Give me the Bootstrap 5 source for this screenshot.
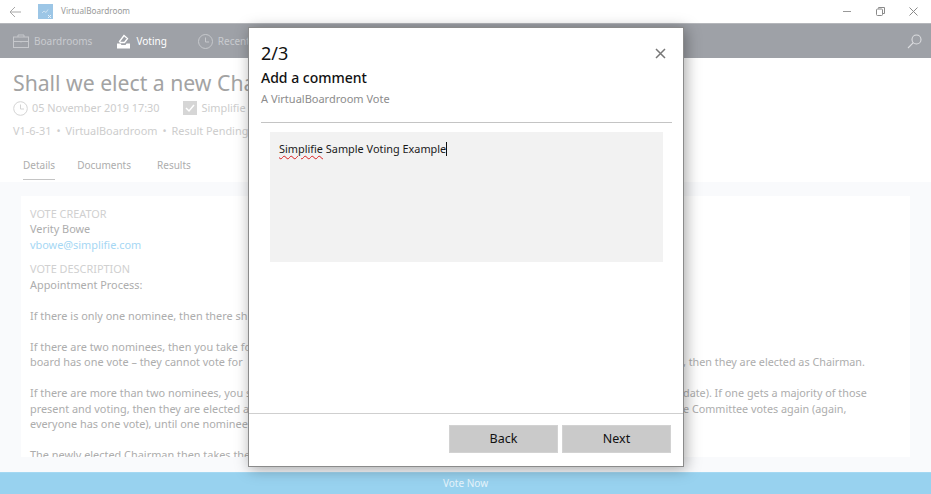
<!DOCTYPE html>
<html lang="en">
<head>
    <meta charset="UTF-8">
    <meta name="viewport" content="width=device-width, initial-scale=1.0">
    <title>VirtualBoardroom</title>
    <link href="https://cdn.jsdelivr.net/npm/bootstrap@5.3.2/dist/css/bootstrap.min.css" rel="stylesheet">
    <style>
        html, body {
            height: 100%;
            overflow: hidden;
        }
        body {
            font-family: "Noto Sans", "Open Sans", sans-serif;
            background-color: #fff;
            color: #999;
        }
        .app-shell {
            position: relative;
            height: 494px;
            display: flex;
            flex-direction: column;
            overflow: hidden;
        }
        .title-bar {
            height: 23px;
            flex: none;
            padding-left: 9px;
            font-size: 8.2px;
            color: #999;
        }
        .app-logo {
            width: 15px;
            height: 15px;
            margin-left: 16px;
            margin-right: 8px;
            background-color: #9cc6e6;
        }
        .win-btns {
            gap: 22px;
            padding-right: 12px;
        }
        .top-nav {
            height: 35px;
            flex: none;
            background-color: #9ea1a7;
            padding: 0 9px 0 13px;
            font-size: 10px;
            color: #c9cbcf;
            border-top: 1px solid #b5b7bb;
        }
        .nav-item-box {
            gap: 5px;
            margin-right: 24px;
            white-space: nowrap;
        }
        .top-nav .active-item {
            color: #fff;
            margin-right: 31px;
        }
        .page-head {
            flex: none;
            height: 124px;
            padding: 8px 13px 0;
        }
        .vote-title {
            font-size: 21.2px;
            font-weight: 400;
            line-height: 34px;
            color: #a3a3a3;
            margin: 0;
            white-space: nowrap;
        }
        .meta-row {
            font-size: 10.9px;
            line-height: 16px;
            color: #cdcdcd;
            white-space: nowrap;
        }
        .meta-check {
            flex: none;
            margin: 0 5px 0 23px;
        }
        .meta-ref {
            margin-top: 7px;
            line-height: 16px;
            font-size: 10.9px;
            color: #cdcdcd;
            white-space: nowrap;
        }
        .meta-dot {
            margin: 0 5px;
        }
        .tab-row {
            margin-top: 15px;
            padding-left: 10px;
            gap: 22px;
            font-size: 10px;
            color: #adadad;
        }
        .tab-entry {
            padding: 4px 0 6px;
        }
        .tab-entry.is-current {
            border-bottom: 1px solid #c4c4c4;
        }
        .detail-area {
            flex: 1 1 auto;
            background-color: #f9fafc;
            padding: 14px 21px 15px;
            min-height: 0;
        }
        .detail-panel {
            height: 100%;
            background-color: #fff;
            padding: 9.6px 9px 0;
            overflow: hidden;
            font-size: 10.9px;
            line-height: 15.5px;
            color: #adadad;
        }
        .field-label {
            color: #d0d0d0;
        }
        .field-link {
            color: #a6d7f4;
            text-decoration: none;
        }
        .field-block {
            margin-bottom: 9px;
        }
        .desc-para {
            margin-bottom: 15.5px;
        }
        .desc-line {
            display: flex;
            white-space: nowrap;
        }
        .desc-left {
            flex: 0 0 653px;
        }
        .desc-right {
            font-size: 10.8px;
        }
        .vote-bar {
            height: 22px;
            flex: none;
            background-color: #98d2ef;
            color: #e6f4fb;
            font-size: 10px;
            border-top: 1px solid #a4d8f2;
        }
        .step-dialog {
            position: absolute;
            left: 248px;
            top: 27px;
            width: 436px;
            height: 440px;
            background-color: #fff;
            border: 1px solid #8b8b8b;
            box-shadow: 2px 2px 14px rgba(0, 0, 0, .35);
            display: flex;
            flex-direction: column;
            color: #111;
        }
        .dialog-head {
            flex: none;
            height: 95px;
            margin: 0 11px 0 12px;
            padding-top: 13px;
            border-bottom: 1px solid #c4c4c4;
            position: relative;
        }
        .step-count {
            font-size: 18px;
            line-height: 24px;
        }
        .step-title {
            font-size: 14px;
            line-height: 20px;
            font-weight: 500;
            margin: 3px 0 0;
        }
        .step-sub {
            font-size: 11px;
            line-height: 16px;
            margin-top: 3px;
            color: #8c8c8c;
        }
        .close-x {
            position: absolute;
            right: 6px;
            top: 20px;
            line-height: 0;
        }
        .dialog-body {
            flex: 1 1 auto;
            padding: 9px 20px 0 21px;
        }
        .comment-box {
            height: 130px;
            background-color: #f2f2f2;
            padding: 8px 9px;
            font-size: 10.9px;
            line-height: 17px;
            color: #1a1a1a;
            white-space: nowrap;
        }
        .spell-err {
            text-decoration: underline wavy #d92020 1px;
            text-underline-offset: 2px;
        }
        .text-caret {
            display: inline-block;
            width: 1px;
            height: 14px;
            background-color: #111;
            vertical-align: -3px;
        }
        .dialog-foot {
            flex: none;
            height: 53px;
            border-top: 1px solid #cfcfcf;
            padding: 11px 12px 0 0;
            gap: 4px;
        }
        .btn.foot-btn {
            width: 109px;
            height: 28px;
            padding: 0;
            border-radius: 0;
            border: 1px solid #d2d2d2;
            background-color: #cacaca;
            color: #111;
            font-size: 12.5px;
            line-height: 26px;
        }
    </style>
</head>
<body>
    <div class="app-shell">
        <div class="title-bar d-flex align-items-center">
            <svg width="13" height="12" viewBox="0 0 13 12" fill="none" stroke="#a8a8a8" stroke-width="1"><path d="M12 6H1M6 1L1 6l5 5"/></svg>
            <svg class="app-logo" viewBox="0 0 15 15"><path d="M4 9l2-2 2 1.500 2-3" fill="none" stroke="#d8e8f5" stroke-width=".8"/><path d="M10 11l3 3M13 11l-3 3" stroke="#e6f0f8" stroke-width="1"/></svg>
            <span>VirtualBoardroom</span>
            <div class="win-btns d-flex align-items-center ms-auto">
                <svg width="11" height="11" viewBox="0 0 11 11" stroke="#999" fill="none"><path d="M1 5.500h8"/></svg>
                <svg width="11" height="11" viewBox="0 0 11 11" stroke="#8a8a8a" fill="none"><rect x="1.500" y="3" width="6" height="6.500" rx="1"/><path d="M3.500 2.500v-1h6v6h-1.500"/></svg>
                <svg width="11" height="11" viewBox="0 0 11 11" stroke="#8a8a8a" fill="none"><path d="M1.500 1.500l8 8M9.500 1.500l-8 8"/></svg>
            </div>
        </div>

        <nav class="top-nav d-flex align-items-center">
            <div class="nav-item-box d-flex align-items-center">
                <svg width="16" height="14" viewBox="0 0 16 14" fill="none" stroke="#c6c8cc"><rect x=".5" y="3" width="15" height="10.500"/><path d="M5 3V1h6v2M.5 7.500h15M8 7v1.500"/></svg>
                <span>Boardrooms</span>
            </div>
            <div class="nav-item-box active-item d-flex align-items-center">
                <svg width="15" height="15" viewBox="0 0 15 15"><path d="M3.500 7.500L8 1.500l3.500 3-3 4h-4z" fill="none" stroke="#fff" stroke-width="1.300"/><path d="M1 9.500h3.500l1 1.500h4l1-1.500H14v5H1z" fill="#fff"/></svg>
                <span>Voting</span>
            </div>
            <div class="nav-item-box d-flex align-items-center">
                <svg width="15" height="15" viewBox="0 0 15 15" fill="none" stroke="#c6c8cc"><circle cx="7.500" cy="7.500" r="7"/><path d="M7.500 3.500v4.500h3.500"/></svg>
                <span>Recent</span>
            </div>
            <svg class="ms-auto" width="15" height="15" viewBox="0 0 15 15" fill="none" stroke="#dcdde0" stroke-width="1.100"><circle cx="9.500" cy="5.500" r="4.500"/><path d="M6.300 8.700L1 14"/></svg>
        </nav>

        <div class="page-head">
            <h1 class="vote-title">Shall we elect a new Cha</h1>
            <div class="meta-row d-flex align-items-center">
                <svg class="flex-shrink-0" width="15" height="15" viewBox="0 0 15 15" fill="none" stroke="#d4d4d4"><circle cx="7.500" cy="7.500" r="6.800"/><path d="M7.500 3.500v4.500h3.500"/></svg>
                <span class="ms-1">05 November 2019 17:30</span>
                <svg class="meta-check" width="14" height="14" viewBox="0 0 14 14"><rect width="14" height="14" fill="#d6d6d6"/><path d="M3 7l3 3 5-6" fill="none" stroke="#fff" stroke-width="1.500"/></svg>
                <span>Simplifie</span>
            </div>
            <div class="meta-ref">V1-6-31<span class="meta-dot">&bull;</span>VirtualBoardroom<span class="meta-dot">&bull;</span>Result Pending</div>
            <div class="tab-row d-flex">
                <div class="tab-entry is-current">Details</div>
                <div class="tab-entry">Documents</div>
                <div class="tab-entry ms-1">Results</div>
            </div>
        </div>

        <div class="detail-area">
            <div class="detail-panel">
                <div class="field-block">
                    <div class="field-label">VOTE CREATOR</div>
                    <div>Verity Bowe</div>
                    <a class="field-link" href="#">vbowe@simplifie.com</a>
                </div>
                <div class="field-label">VOTE DESCRIPTION</div>
                <div class="desc-para">Appointment Process:</div>
                <div class="desc-para">If there is only one nominee, then there sh</div>
                <div class="desc-para">
                    <div class="desc-line"><span class="desc-left">If there are two nominees, then you take fo</span></div>
                    <div class="desc-line"><span class="desc-left">board has one vote &ndash; they cannot vote for</span><span class="desc-right">, then they are elected as Chairman.</span></div>
                </div>
                <div class="desc-para">
                    <div class="desc-line"><span class="desc-left">If there are more than two nominees, you s</span><span class="desc-right">date). If one gets a majority of those</span></div>
                    <div class="desc-line"><span class="desc-left">present and voting, then they are elected a</span><span class="desc-right">e Committee votes again (again,</span></div>
                    <div class="desc-line"><span class="desc-left">everyone has one vote), until one nominee</span></div>
                </div>
                <div class="desc-para">The newly elected Chairman then takes the</div>
            </div>
        </div>

        <div class="vote-bar d-flex align-items-center justify-content-center">Vote Now</div>

        <div class="step-dialog">
            <div class="dialog-head">
                <div class="step-count">2/3</div>
                <h2 class="step-title">Add a comment</h2>
                <div class="step-sub">A VirtualBoardroom Vote</div>
                <svg class="close-x" width="11" height="11" viewBox="0 0 11 11" stroke="#777" stroke-width="1.500" fill="none"><path d="M1 1l9 9M10 1l-9 9"/></svg>
            </div>
            <div class="dialog-body">
                <div class="comment-box"><span class="spell-err">Simplifie</span> Sample Voting Example<span class="text-caret"></span></div>
            </div>
            <div class="dialog-foot d-flex justify-content-end">
                <button type="button" class="btn foot-btn">Back</button>
                <button type="button" class="btn foot-btn">Next</button>
            </div>
        </div>
    </div>

    <script src="https://cdn.jsdelivr.net/npm/bootstrap@5.3.2/dist/js/bootstrap.bundle.min.js"></script>
</body>
</html>
